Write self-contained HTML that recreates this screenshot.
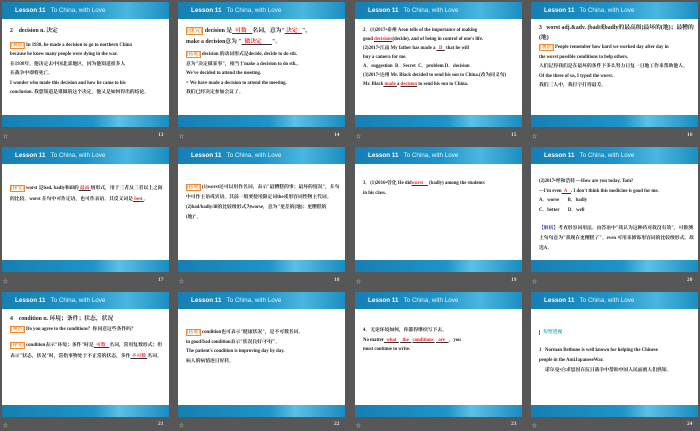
<!DOCTYPE html>
<html><head><meta charset="utf-8"><style>
body{margin:0;width:700px;height:431px;background:#575757;position:relative;overflow:hidden;font-family:"Liberation Serif","Noto Serif CJK SC",serif}
.s{position:absolute;width:167px;height:125px;background:#fff;overflow:hidden}
.h{position:absolute;left:0;top:0;width:100%;height:17px;background:linear-gradient(90deg,#177fb2,#1e94c8 50%,#4ab6df 75%,#1b8ec2);color:#fff;font:bold 6.3px "Liberation Sans",sans-serif;line-height:17px;padding-left:13px;box-sizing:border-box;white-space:nowrap}
.h span{font-weight:normal;margin-left:5px;opacity:.9}
.f{position:absolute;left:0;bottom:0;width:100%;height:12px;background:linear-gradient(90deg,#177fb2,#1e94c8 55%,#5cc0e6 70%,#1a8cc0)}
.c{position:absolute;left:8px;right:4px;top:24px;font-size:4.8px;line-height:9.5px;color:#222;font-weight:bold}
.n{position:absolute;color:#ddd;font:bold 5.5px "Liberation Serif",serif}
.l{position:absolute;color:#ccc;font:5px "Noto Sans CJK SC",sans-serif}
.o{color:#f08a30;border:0.5px solid #f08a30}
u{color:#e22;text-decoration:underline #333}
.big{font-size:5.8px}
</style></head><body>
<!-- row1 -->
<div class="s" style="left:2px;top:2px"><div class="h">Lesson 11<span>To China, with Love</span></div><div class="c" style="top:25px"><div class="big">2&nbsp;&nbsp;&nbsp; decision n. 决定</div><div style="margin-top:4px"><span class="o">[观察]</span> In 1938, he made a decision to go to northern China<br>because he knew many people were dying in the war.<br>在1938年，他决定去中国北部地区，因为他知道很多人<br>在战争中即将死亡。<br>I wonder who made this decision and how he came to his<br>conclusion. 我想知道是谁做的这个决定，他又是如何得出的结论。</div></div><div class="f"></div></div>
<div class="s" style="left:178px;top:2px"><div class="h">Lesson 11<span>To China, with Love</span></div><div class="c" style="top:24px;line-height:11px"><div class="big"><span class="o">[探究]</span> decision 是<u>&nbsp;&nbsp;可数&nbsp;&nbsp;&nbsp;&nbsp;</u>名词，意为"<u>&nbsp;决定&nbsp;&nbsp;&nbsp;</u>"，<br>make a decision意为 "<u>&nbsp;&nbsp;做决定&nbsp;&nbsp;&nbsp;&nbsp;&nbsp;&nbsp;&nbsp;</u>"。</div><div style="line-height:9.5px;margin-top:2px"><span class="o">[拓展]</span> decision 的动词形式是decide, decide to do sth.<br>意为"决定做某事"，相当于make a decision to do sth.。<br>We've decided to attend the meeting.<br>= We have made a decision to attend the meeting.<br>我们已经决定参加会议了。</div></div><div class="f"></div></div>
<div class="s" style="left:355px;top:2px"><div class="h">Lesson 11<span>To China, with Love</span></div><div class="c" style="top:24px;line-height:9px">2．(1)2017•泰州 Aron tells of the importance of making<br>good <u>decisions</u>(decide), and of being in control of one's life.<br>(2)2017•江南 My father has made a <u>&nbsp;&nbsp;D&nbsp;&nbsp;</u> that he will<br>buy a camera for me.<br>A．suggestion&nbsp; B．Secret&nbsp; C．problem D．decision<br>(3)2017•达州 Mr. Black decided to send his son to China.(改为同义句)<br>Mr. Black<u>&nbsp;made&nbsp;</u>a <u>decision</u> to send his son to China.</div><div class="f"></div></div>
<div class="s" style="left:531px;top:2px"><div class="h">Lesson 11<span>To China, with Love</span></div><div class="c" style="top:22px"><div class="big">3&nbsp;&nbsp; worst adj.&amp;adv. (bad或badly的最高级)最坏的(地)；最糟的(地)</div><span class="o">[观察]</span> People remember how hard we worked day after day in<br>the worst possible conditions to help others.<br>人们记得我们是在最坏的条件下多么努力日复一日地工作来帮助他人。<br>Of the three of us, I typed the worst.<br>我们三人中，我打字打得最差。</div><div class="f"></div></div>
<!-- row2 -->
<div class="s" style="left:2px;top:147px"><div class="h">Lesson 11<span>To China, with Love</span></div><div class="c" style="top:36px;line-height:11px"><span class="o">[探究]</span> worst 是bad, badly和ill的<u>&nbsp;最高&nbsp;</u>级形式，用于三者及三者以上之间的比较。worst 在句中可作定语，也可作表语。其反义词是<u>&nbsp;best&nbsp;</u>。</div><div class="f"></div></div>
<div class="s" style="left:178px;top:147px"><div class="h">Lesson 11<span>To China, with Love</span></div><div class="c" style="top:36px;line-height:10px"><span class="o">[拓展]</span> (1)worst还可以用作名词，表示"最糟糕的事；最坏的情况"，在句中可作主语或宾语，其前一般要使用限定词the或形容词性物主代词。<br>(2)bad/badly/ill的比较级形式为worse，意为"更差的(地)；更糟糕的(地)"。</div><div class="f"></div></div>
<div class="s" style="left:355px;top:147px"><div class="h">Lesson 11<span>To China, with Love</span></div><div class="c" style="top:32px">3．(1)2016•曾化 He did<u>worst&nbsp;&nbsp;&nbsp;&nbsp;</u> (badly) among the students<br>in his class.</div><div class="f"></div></div>
<div class="s" style="left:531px;top:147px"><div class="h">Lesson 11<span>To China, with Love</span></div><div class="c" style="top:30px">(2)2017•呼和浩特 —How are you today, Tom?<br>—I'm even<u>&nbsp;&nbsp;A&nbsp;&nbsp;&nbsp;</u>. I don't think this medicine is good for me.<br>A．worse&nbsp;&nbsp;&nbsp;&nbsp;&nbsp;&nbsp; B．badly<br>C．better&nbsp;&nbsp;&nbsp;&nbsp;&nbsp;&nbsp; D．well<div style="margin-top:9px;line-height:10px"><span style="color:#23a">【解析】</span>考查形容词用法。由答语中"我认为这种药对我没有效"，可推测上句句意为"我现在更糟糕了"。even 可用来修饰形容词的比较级形式。故选A。</div></div><div class="f"></div></div>
<!-- row3 -->
<div class="s" style="left:2px;top:292px"><div class="h">Lesson 11<span>To China, with Love</span></div><div class="c" style="top:22px;line-height:10.5px"><div class="big">4&nbsp;&nbsp;&nbsp; condition n. 环境；条件；状态，状况</div><span class="o">[观察]</span> Do you agree to the conditions？你同意这些条件吗？<div style="margin-top:6px"><span class="o">[探究]</span> condition表示"环境；条件"时是<u>&nbsp;&nbsp;可数&nbsp;&nbsp;&nbsp;</u>名词，常用复数形式；但表示"状态，状况"时，常指事物处于不正常的状态，多作<u>&nbsp;不可数&nbsp;</u>名词。</div></div><div class="f"></div></div>
<div class="s" style="left:178px;top:292px"><div class="h">Lesson 11<span>To China, with Love</span></div><div class="c" style="top:36px"><span class="o">[拓展]</span> condition也可表示"健康状况"，是不可数名词。<br>in good/bad condition表示"状况良好/不好"。<br>The patient's condition is improving day by day.<br>病人的病情逐日好转。</div><div class="f"></div></div>
<div class="s" style="left:355px;top:292px"><div class="h">Lesson 11<span>To China, with Love</span></div><div class="c" style="top:34px">4．无论环境如何，你都得继续写下去。<br>No matter<u>&nbsp;&nbsp;what&nbsp;&nbsp;</u> <u>&nbsp;&nbsp;the&nbsp;&nbsp;</u> <u>conditions&nbsp;</u> <u>&nbsp;&nbsp;are&nbsp;&nbsp;&nbsp;</u>，you<br>must continue to write.</div><div class="f"></div></div>
<div class="s" style="left:531px;top:292px"><div class="h">Lesson 11<span>To China, with Love</span></div><div class="c" style="top:36px"><span style="border-left:1px solid #e33;padding-left:3px;color:#2aa">句型透视</span><div style="margin-top:8px;line-height:10px">1&nbsp;&nbsp; Norman Bethune is well known for helping the Chinese<br>people in the AntiJapaneseWar.<br>&nbsp;&nbsp;&nbsp;&nbsp;&nbsp;诺尔曼•白求恩因在抗日战争中帮助中国人民而被人们熟知。</div></div><div class="f"></div></div>
<!-- labels -->
<div class="l" style="left:3px;top:133px">☆</div><div class="n" style="left:158px;top:132px">13</div>
<div class="l" style="left:179px;top:133px">☆</div><div class="n" style="left:334px;top:132px">14</div>
<div class="l" style="left:356px;top:133px">☆</div><div class="n" style="left:511px;top:132px">15</div>
<div class="l" style="left:532px;top:133px">☆</div><div class="n" style="left:687px;top:132px">16</div>
<div class="l" style="left:3px;top:278px">☆</div><div class="n" style="left:158px;top:277px">17</div>
<div class="l" style="left:179px;top:278px">☆</div><div class="n" style="left:334px;top:277px">18</div>
<div class="l" style="left:356px;top:278px">☆</div><div class="n" style="left:511px;top:277px">19</div>
<div class="l" style="left:532px;top:278px">☆</div><div class="n" style="left:687px;top:277px">20</div>
<div class="l" style="left:3px;top:422px">☆</div><div class="n" style="left:158px;top:421px">21</div>
<div class="l" style="left:179px;top:422px">☆</div><div class="n" style="left:334px;top:421px">22</div>
<div class="l" style="left:356px;top:422px">☆</div><div class="n" style="left:511px;top:421px">23</div>
<div class="l" style="left:532px;top:422px">☆</div><div class="n" style="left:687px;top:421px">24</div>
</body></html>
